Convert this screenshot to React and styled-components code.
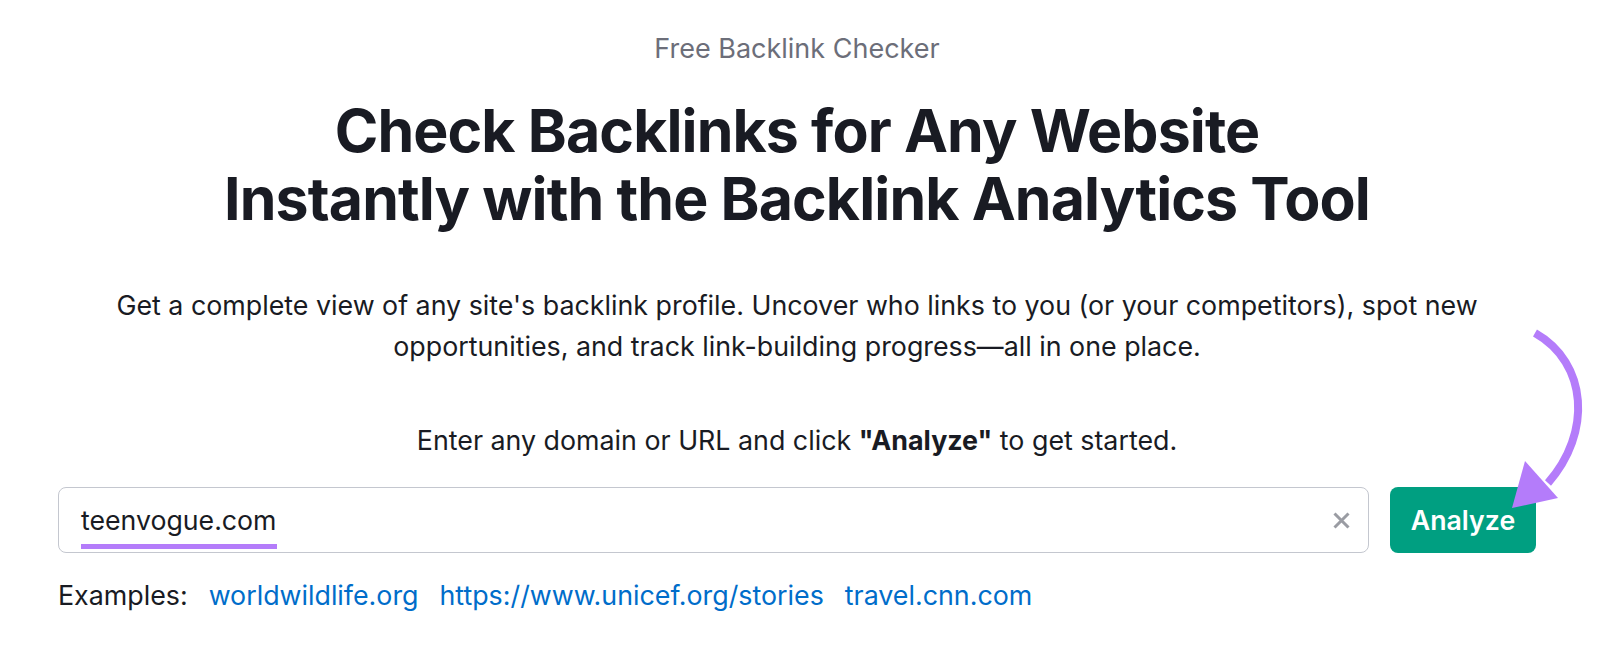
import React from 'react';
import styled, { createGlobalStyle } from 'styled-components';

const GlobalStyle = createGlobalStyle`
  html, body {
    margin: 0;
    padding: 0;
    background: #ffffff;
    font-family: Inter, "Noto Sans", "Liberation Sans", sans-serif;
    color: #191b23;
  }
`

const Page = styled.main`
  width: 1600px;
  height: 656px;
  overflow: hidden;
  box-sizing: border-box;
  padding: 33px 64px 0 58px;
`
const Column = styled.section`
  position: relative;
  display: flex;
  flex-direction: column;
  align-items: center;
  text-align: center;
`
const Eyebrow = styled.p`
  margin: 0;
  font-size: 27px;
  line-height: 32px;
  color: #6c6e79;
`
const Title = styled.h1`
  margin: 32px 0 0 0;
  font-size: 59px;
  line-height: 68px;
  font-weight: 700;
  letter-spacing: -0.015em;
  color: #191b23;
`
const Lead = styled.p`
  margin: 52px 0 0 0;
  font-size: 26.8px;
  line-height: 41px;
  color: #191b23;
`
const Hint = styled.p`
  margin: 57px 0 0 0;
  font-size: 26.8px;
  line-height: 32px;
  b { font-weight: 700; }
`
const SearchRow = styled.form`
  align-self: stretch;
  display: flex;
  gap: 21px;
  margin-top: 31px;
`
const InputBox = styled.div`
  position: relative;
  flex: 1;
  height: 66px;
  box-sizing: border-box;
  border: 1px solid #c4c7cf;
  border-radius: 8px;
  display: flex;
  align-items: center;
  padding: 0 18px 0 22px;
`
const Field = styled.span`
  flex: 1;
  text-align: left;
  font-size: 26.7px;
  color: #191b23;
`
const Clear = styled.svg`
  display: block;
  flex: none;
`
const Underline = styled.span`
  position: absolute;
  left: 22px;
  bottom: 3px;
  width: 196px;
  height: 5px;
  background: #b47cfa;
`
const Analyze = styled.button`
  width: 146px;
  height: 66px;
  border: 0;
  border-radius: 8px;
  background: #009f81;
  color: #ffffff;
  font-family: inherit;
  font-size: 26.7px;
  font-weight: 600;
`
const Examples = styled.div`
  align-self: stretch;
  display: flex;
  gap: 21px;
  margin-top: 26px;
  font-size: 26.8px;
  line-height: 32px;
`
const ExampleLink = styled.a`
  color: #006dca;
  text-decoration: none;
`
const Arrow = styled.svg`
  position: absolute;
  left: 1440px;
  top: 290px;
  overflow: visible;
`

const App = () => {
  return (
    <Page>
      <GlobalStyle />
      <Column>
        <Eyebrow>Free Backlink Checker</Eyebrow>
        <Title>
          Check Backlinks for Any Website
          <br />
          Instantly with the Backlink Analytics Tool
        </Title>
        <Lead>
          Get a complete view of any site's backlink profile. Uncover who links to you (or your competitors), spot new
          <br />
          opportunities, and track link-building progress—all in one place.
        </Lead>
        <Hint>
          Enter any domain or URL and click <b>"Analyze"</b> to get started.
        </Hint>
        <SearchRow onSubmit={e => e.preventDefault()}>
          <InputBox>
            <Field>teenvogue.com</Field>
            <Clear width="17" height="17" viewBox="0 0 17 17">
              <path d="M1.5 1.5 L15.5 15.5 M15.5 1.5 L1.5 15.5" stroke="#9a9ca3" strokeWidth="3" />
            </Clear>
            <Underline />
          </InputBox>
          <Analyze type="submit">Analyze</Analyze>
        </SearchRow>
        <Examples>
          <span>Examples:</span>
          <ExampleLink href="#">worldwildlife.org</ExampleLink>
          <ExampleLink href="#">https://www.unicef.org/stories</ExampleLink>
          <ExampleLink href="#">travel.cnn.com</ExampleLink>
        </Examples>
        {/* annotation arrow pointing at the button */}
        <Arrow width="160" height="220" viewBox="0 0 160 220">
          <path d="M37 10 C 90 40, 94 110, 50 160" fill="none" stroke="#b47cfa" strokeWidth="8" />
          <polygon points="27,138 60,175 14,185" fill="#b47cfa" />
        </Arrow>
      </Column>
    </Page>
  );
};

export default App;
